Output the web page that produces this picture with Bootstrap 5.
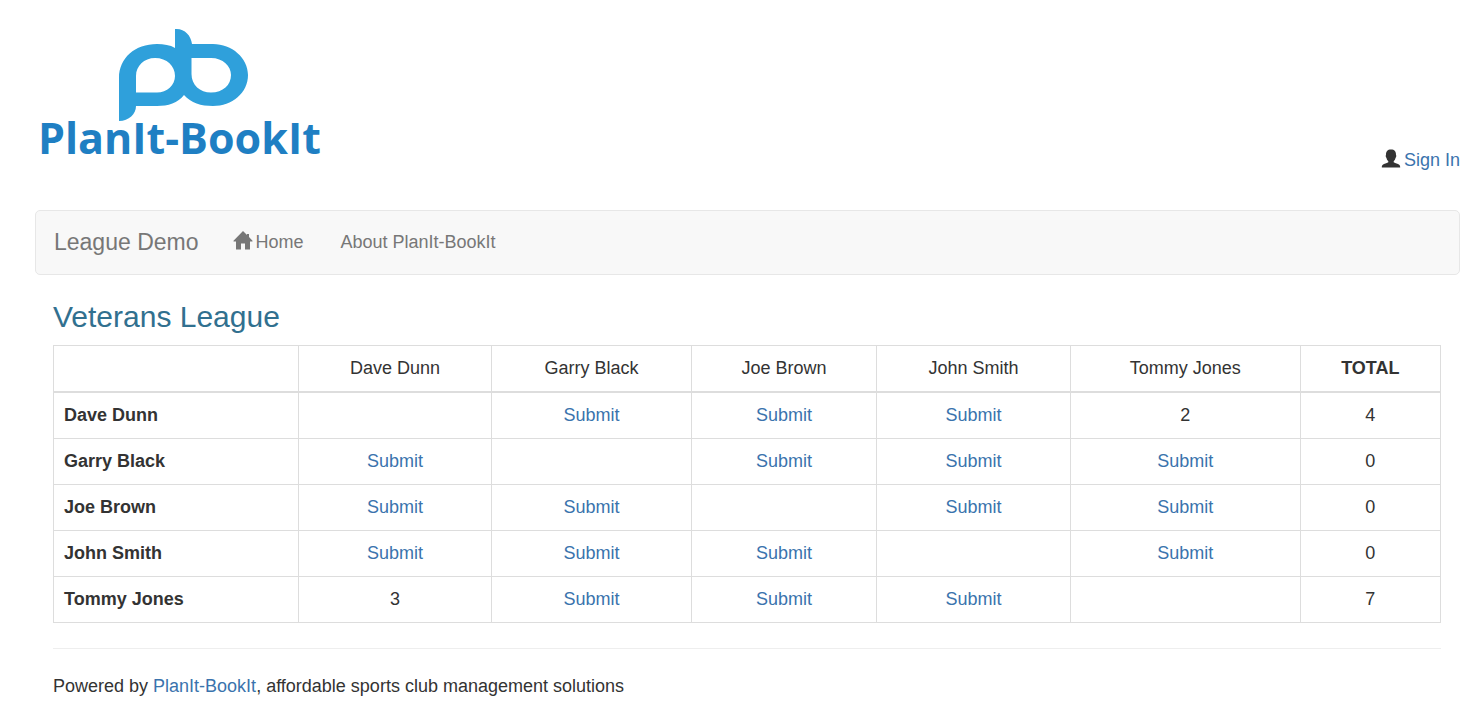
<!DOCTYPE html>
<html lang="en">
<head>
<meta charset="utf-8">
<meta name="viewport" content="width=device-width, initial-scale=1">
<title>League Demo - Veterans League</title>
<link href="https://cdn.jsdelivr.net/npm/bootstrap@5.3.0/dist/css/bootstrap.min.css" rel="stylesheet">
<style>
  body { font-family: "Liberation Sans", Arial, sans-serif; font-size: 18px; line-height: 25px; color: #333; background: #fff; }
  a { color: #3a73ad; text-decoration: none; }
  a:hover { text-decoration: underline; }
  .page { padding: 20px 22px 0 35px; }
  .site-head { height: 190px; }
  .site-logo { width: 300px; height: 155px; }
  .logo-text { font: 700 43px "Open Sans", sans-serif; fill: #1f7fc3; }
  .sign-in { margin-bottom: 37px; }
  .glyph { width: 18px; height: 18px; margin-bottom: 3px; fill: currentColor; overflow: visible; }
  .league-nav { height: 65px; padding: 0 18px; background: #f8f8f8; border: 1px solid #e7e7e7; border-radius: 5px; }
  .league-nav .navbar-brand { font-size: 23px; color: #777; margin-right: 35px; }
  .league-nav .nav-link { color: #777; padding: 0; }
  .league-nav .navbar-nav { gap: 37px; }
  .body-content { padding: 0 19px 0 18px; }
  h1 { font-size: 30px; line-height: 34px; color: #31708f; margin: 25px 0 11px; font-weight: 400; }
  .league-table { table-layout: fixed; border-color: #ddd; color: #333; margin-bottom: 25px; text-align: center; }
  .league-table th, .league-table td { padding: 10px; }
  .league-table thead th { font-weight: 400; border-bottom-width: 2px; }
  .league-table thead th:last-child { font-weight: 700; }
  .league-table tbody th { text-align: left; }
  .league-table > tbody { border-top: 0; }
  hr { margin: 0 0 25px; border-color: #eee; opacity: 1; }
</style>
</head>
<body>
<div class="page container-fluid">
  <header class="site-head d-flex justify-content-between align-items-start">
    <a href="#" aria-label="PlanIt-BookIt">
      <svg class="site-logo d-block" viewBox="35 20 300 155">
        <path fill="#2fa0db" fill-rule="evenodd" d="M175 29C184 28 191 35 192 44H213C232 44 248 58 248 75C248 93 232 106 213 106C201 106 191 103 184 95C178 103 168 106 157 106H136C136 114 129 121 119 121V78C119 58 135 44 157 44C164 44 170 45 175 48ZM136 92.500V76C136 66 144 58 155 58C167 58 175 66 175 76C175 85 167 92.500 157 92.500ZM191.500 58V74C191.500 85 200 92.500 211 92.500C223 92.500 231 85 231 75C231 66 223 58 211 58Z"/>
        <text class="logo-text" x="38" y="154">PlanIt-BookIt</text>
      </svg>
    </a>
    <div class="sign-in align-self-end d-flex align-items-center gap-1">
      <svg class="glyph" viewBox="0 0 18 18" aria-hidden="true"><path d="M9 -.5C12.500 -.5 14.200 1.500 14 5C14.600 5.500 14.200 7.300 13.500 8C13.200 9.500 12.500 10.500 11.700 11.200V12.300C13.500 13.200 15.800 13.800 17.200 14.800C18 15.500 18.200 16.300 18.200 17.500H-.2C-.2 16.300 0 15.500 .8 14.800C2.200 13.800 4.500 13.200 6.300 12.300V11.200C5.500 10.500 4.800 9.500 4.500 8C3.800 7.300 3.400 5.500 4 5C3.800 1.500 5.500 -.5 9 -.5Z"/></svg>
      <a href="#">Sign In</a>
    </div>
  </header>

  <nav class="league-nav navbar navbar-expand">
    <a class="navbar-brand py-0" href="#">League Demo</a>
    <ul class="navbar-nav">
      <li class="nav-item"><a class="nav-link px-0 d-flex align-items-center gap-1" href="#"><svg class="glyph" viewBox="0 0 18 18" aria-hidden="true"><path d="M9 -1L13 3V2H15V5L18.500 8.800V9.500H16V17.500H11V11.500H7V17.500H2V9.500H-.5V8.800Z"/></svg>Home</a></li>
      <li class="nav-item"><a class="nav-link px-0" href="#">About PlanIt-BookIt</a></li>
    </ul>
  </nav>

  <main class="body-content">
    <h1>Veterans League</h1>
    <table class="league-table table table-bordered">
      <colgroup>
        <col style="width:17.66%"><col style="width:13.92%"><col style="width:14.42%"><col style="width:13.34%"><col style="width:13.99%"><col style="width:16.55%"><col style="width:10.12%">
      </colgroup>
      <thead>
        <tr><th></th><th scope="col">Dave Dunn</th><th scope="col">Garry Black</th><th scope="col">Joe Brown</th><th scope="col">John Smith</th><th scope="col">Tommy Jones</th><th scope="col">TOTAL</th></tr>
      </thead>
      <tbody>
        <tr><th scope="row">Dave Dunn</th><td></td><td><a href="#">Submit</a></td><td><a href="#">Submit</a></td><td><a href="#">Submit</a></td><td>2</td><td>4</td></tr>
        <tr><th scope="row">Garry Black</th><td><a href="#">Submit</a></td><td></td><td><a href="#">Submit</a></td><td><a href="#">Submit</a></td><td><a href="#">Submit</a></td><td>0</td></tr>
        <tr><th scope="row">Joe Brown</th><td><a href="#">Submit</a></td><td><a href="#">Submit</a></td><td></td><td><a href="#">Submit</a></td><td><a href="#">Submit</a></td><td>0</td></tr>
        <tr><th scope="row">John Smith</th><td><a href="#">Submit</a></td><td><a href="#">Submit</a></td><td><a href="#">Submit</a></td><td></td><td><a href="#">Submit</a></td><td>0</td></tr>
        <tr><th scope="row">Tommy Jones</th><td>3</td><td><a href="#">Submit</a></td><td><a href="#">Submit</a></td><td><a href="#">Submit</a></td><td></td><td>7</td></tr>
      </tbody>
    </table>
    <hr>
    <footer><p class="mb-0">Powered by <a href="#">PlanIt-BookIt</a>, affordable sports club management solutions</p></footer>
  </main>
</div>
<script src="https://cdn.jsdelivr.net/npm/bootstrap@5.3.0/dist/js/bootstrap.bundle.min.js"></script>
</body>
</html>
